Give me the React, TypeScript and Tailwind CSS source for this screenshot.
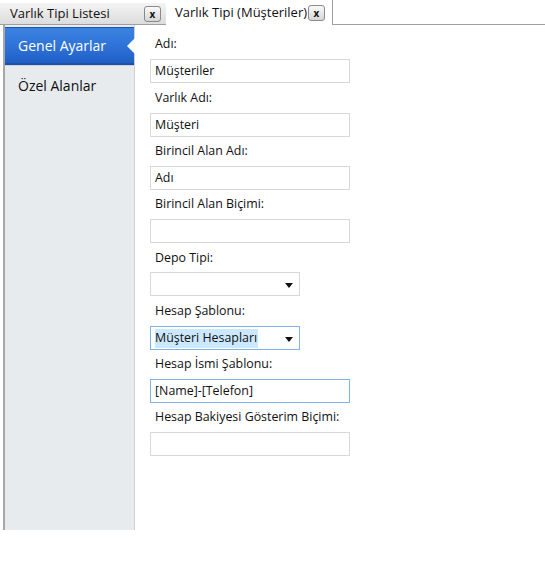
import React from 'react';

const font = { fontFamily: '"Open Sans", "Noto Sans", sans-serif' };

const CloseBtn: React.FC = () => (
  <span className="flex h-[16px] w-[17px] shrink-0 items-center justify-center rounded-[3px] border border-[#8a8a8a] bg-gradient-to-b from-[#fafafa] to-[#d6d6d6] text-[10px] font-bold leading-none text-[#111]">
    x
  </span>
);

const Caret: React.FC = () => (
  <svg width="8" height="5" viewBox="0 0 8 5" className="absolute right-[6px] top-[10px]">
    <path d="M0 0h8L4 5z" fill="#111" />
  </svg>
);

type Field = { label: string; value?: string; kind?: 'text' | 'select' | 'selectSel' | 'focus' };

const fields: Field[] = [
  { label: 'Adı:', value: 'Müşteriler' },
  { label: 'Varlık Adı:', value: 'Müşteri' },
  { label: 'Birincil Alan Adı:', value: 'Adı' },
  { label: 'Birincil Alan Biçimi:' },
  { label: 'Depo Tipi:', kind: 'select' },
  { label: 'Hesap Şablonu:', value: 'Müşteri Hesapları', kind: 'selectSel' },
  { label: 'Hesap İsmi Şablonu:', value: '[Name]-[Telefon]', kind: 'focus' },
  { label: 'Hesap Bakiyesi Gösterim Biçimi:' },
];

export default function App() {
  return (
    <div className="relative h-[569px] w-[545px] bg-white text-[12.4px] text-[#111]" style={font}>
      {/* tabs */}
      <div className="flex h-[25px] items-end whitespace-nowrap text-[13px]">
        <div className="flex h-[22px] w-[166px] items-center justify-between border-b border-[#a0a0a0] bg-gradient-to-b from-[#f4f4f4] to-[#dcdcdc] pl-[10px] pr-[5px]">
          <span>Varlık Tipi Listesi</span>
          <CloseBtn />
        </div>
        <div className="flex h-[25px] w-[167px] items-center justify-between border-r border-[#a0a0a0] bg-white pl-[9px] pr-[7px]">
          <span>Varlık Tipi (Müşteriler)</span>
          <CloseBtn />
        </div>
        <div className="h-[25px] flex-1 border-b border-[#a0a0a0]" />
      </div>

      <div className="flex">
        {/* sidebar */}
        <div className="ml-[3px] h-[505px] w-[132px] border-l-2 border-r border-l-[#a8a8a8] border-r-[#d0d0d0] bg-[#e7ebee] pt-[2px]">
          <div className="relative flex h-[36px] items-center border-t border-[#1d56b3] bg-gradient-to-b from-[#3b82e0] via-[#2f73d8] to-[#1f5fc6] pl-[13px] text-[14px] text-white">
            Genel Ayarlar
            <span className="absolute right-[-1px] top-[10px] h-0 w-0 border-y-[8px] border-r-[8px] border-y-transparent border-r-white" />
          </div>
          <div className="h-[2px] bg-[#1c4fa8]" />
          <div className="h-[1px] bg-[#cfd4d8]" />
          <div className="flex h-[38px] items-center pl-[13px] text-[14px]">Özel Alanlar</div>
        </div>

        {/* form */}
        <div className="w-[200px] pl-[15px] pt-[5px]">
          {fields.map((f) => (
            <div key={f.label}>
              <div className="flex h-[29.3px] items-center whitespace-nowrap pl-[5px]">{f.label}</div>
              {f.kind === 'select' || f.kind === 'selectSel' ? (
                <div
                  className={`relative flex h-[24px] w-[150px] items-center border px-[4px] pt-[1px] ${
                    f.kind === 'selectSel' ? 'border-[#7eb4ea]' : 'border-[#d8d8d8]'
                  }`}
                >
                  {f.value && <span className="bg-[#cce8ff] pr-[1px]">{f.value}</span>}
                  <Caret />
                </div>
              ) : (
                <div
                  className={`flex h-[24px] w-[200px] items-center border px-[4px] pt-[1px] ${
                    f.kind === 'focus' ? 'border-[#7eb4ea]' : 'border-[#d8d8d8]'
                  }`}
                >
                  {f.value}
                </div>
              )}
            </div>
          ))}
        </div>
      </div>
    </div>
  );
}
